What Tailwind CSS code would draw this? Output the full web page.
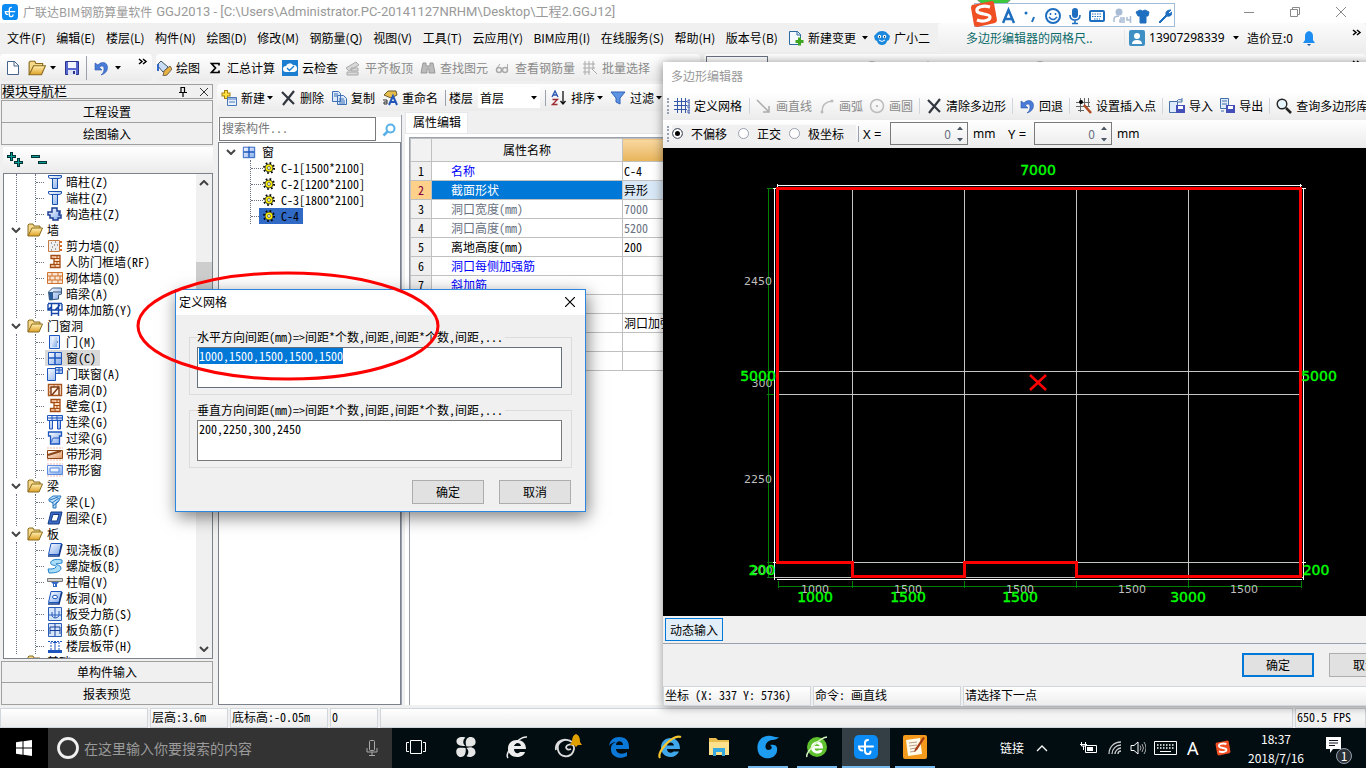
<!DOCTYPE html>
<html lang="zh-CN">
<head>
<meta charset="utf-8">
<title>广联达BIM钢筋算量软件 GGJ2013</title>
<script src="https://cdn.jsdelivr.net/npm/@tailwindcss/browser@4"></script>
</head>
<body class="h-screen overflow-hidden bg-[#f0f0f0] font-['Noto_Sans_CJK_SC',sans-serif] text-xs leading-4 text-black select-auto">

<svg width="0" height="0" class="absolute" aria-hidden="true">
  <defs>
    <linearGradient id="gb" x1="0" y1="0" x2="1" y2="1"><stop offset="0" stop-color="#fff"/><stop offset="1" stop-color="#7fa8ea"/></linearGradient>
    <linearGradient id="gy" x1="0" y1="0" x2="0" y2="1"><stop offset="0" stop-color="#fff0b0"/><stop offset="1" stop-color="#dfa127"/></linearGradient>
    <linearGradient id="go" x1="0" y1="0" x2="1" y2="1"><stop offset="0" stop-color="#fff"/><stop offset="1" stop-color="#e0955c"/></linearGradient>
  </defs>
  <symbol id="folder" viewBox="0 0 16 16"><path d="M1 14V3l1-1h4l1 2h6v3" fill="#f5d98a" stroke="#8a6a1c"/><path d="M1 14 5 6h10.500l-3.500 8z" fill="url(#gy)" stroke="#8a6a1c"/></symbol>
  <symbol id="col" viewBox="0 0 16 16"><path d="M1.500 1.500h13v2l-2 1h-9l-2-1zM5.500 4.500h5v10h-5z" fill="url(#gb)" stroke="#1a4fae"/></symbol>
  <symbol id="gcol" viewBox="0 0 16 16"><path d="M5 2h5v3h3v2h-1v2h2v3h-3v2H6v-2H3v-3H1V6h4z" fill="url(#gb)" stroke="#1c3f95" stroke-width="1.500"/></symbol>
  <symbol id="wallq" viewBox="0 0 16 16"><path d="M1.500 2.500h11v11h-11z" fill="#eee" stroke="#c8793d"/><path d="M13 4h2M13 8h2M13 12h2" stroke="#d36a20" stroke-width="2"/><path d="M4 5h1M8 4h1M10 7h1M5 9h1M8 11h1M4 12h1M7 7h1" stroke="#555"/></symbol>
  <symbol id="brickl" viewBox="0 0 16 16"><path d="M4 1.500h9v12H3.500v-3H7v-6H4z" fill="#ffd9b8" stroke="#a24b12" stroke-width="1.300"/><path d="M10 2v2M7 4.500h6M7 7.500h6M7 10.500h6M10 8v2M8 11v2" stroke="#a24b12"/></symbol>
  <symbol id="brick" viewBox="0 0 16 16"><path d="M.5 2.500h15v11H.5z" fill="#fbe6d4" stroke="#cf7330"/><path d="M0 6h16M0 10h16M5 2v4M11 2v4M3 6v4M8 6v4M13 6v4M5 10v4M11 10v4" stroke="#cf7330"/></symbol>
  <symbol id="beam" viewBox="0 0 16 16"><path d="m1.500 6 4-4h9v6l-3 1v4l-9 1z" fill="url(#gb)" stroke="#3c5878"/><path d="M2 6h4v8H2z" fill="#2d5d97"/><path d="M6 6h8" stroke="#3c5878"/></symbol>
  <symbol id="rebar" viewBox="0 0 16 16"><path d="M1 1.500h14M1 2v6h14V2M4.500 2v12M11.500 2v12M4 11.500h8M1 8l4-4M8 8l5-5" fill="none" stroke="#1546a8" stroke-width="1.400"/></symbol>
  <symbol id="door" viewBox="0 0 16 16"><path d="M2.500 1.500h10v13h-10z" fill="#d6e6ff" stroke="#1c55bd"/><path d="M5 3h5v10H5z" fill="url(#gb)"/><path d="M10 8h1" stroke="#134"/></symbol>
  <symbol id="win" viewBox="0 0 16 16"><path d="M1.500 2.500h13v12h-13z" fill="url(#gb)" stroke="#1c55bd"/><path d="M8 2v12M2 8h12" stroke="#1c55bd" stroke-width="1.500"/></symbol>
  <symbol id="doorwin" viewBox="0 0 16 16"><path d="M.5 2.500h8v12h-8zM8.500 1.500h7v6h-7z" fill="url(#gb)" stroke="#1c55bd"/><path d="M12 1v6M9 4h6" stroke="#1c55bd"/></symbol>
  <symbol id="hole" viewBox="0 0 16 16"><path d="M1.500 2.500h13v11h-13z" fill="#fff0e2" stroke="#a8541f" stroke-width="1.400"/><path d="M1 6h3M1 10h3M7 3v2M11 3v2" stroke="#cf7330"/><path d="M4 13V5h8v8M5 13l6-7" fill="none" stroke="#7a3510" stroke-width="1.400"/></symbol>
  <symbol id="lbeam" viewBox="0 0 16 16"><path d="M.5 1.500h15v5H.5zM2.500 7v8h3V7M10.500 7v8h3V7" fill="url(#gb)" stroke="#1c55bd"/><path d="M1 4h14M5 2v4M10 2v4" stroke="#1c55bd"/></symbol>
  <symbol id="gbeam" viewBox="0 0 16 16"><path d="M1.500 2h13v4h-2v8h-9V6h-2z" fill="url(#gb)" stroke="#1c55bd" stroke-width="1.300"/><path d="M4 12c2 0 0-4 3-4h5" fill="none" stroke="#1c55bd"/></symbol>
  <symbol id="striph" viewBox="0 0 16 16"><path d="M.5 4.500h15v8H.5z" fill="url(#go)" stroke="#8c4517"/><path d="M1 9 14 5" stroke="#8c4517" stroke-width="2"/><path d="M0 2h16M0 14h16" stroke="#f1b9a0" stroke-dasharray="2 1"/></symbol>
  <symbol id="stripw" viewBox="0 0 16 16"><path d="M.5 3.500h15v9H.5z" fill="url(#gb)" stroke="#5b8be0"/><path d="M3 6h9v4H3z" fill="#eef5ff" stroke="#5b8be0"/><path d="M0 2h16M0 14h16" stroke="#f3b9b0" stroke-dasharray="2 1"/></symbol>
  <symbol id="beaml" viewBox="0 0 16 16"><path d="m2 5 4-3h8l-2 4v1l-3 2v5H6V9L2 7z" fill="#bfe0fb" stroke="#2273bd"/><path d="m3 6 8-3M5 9l7-5M6 12l5-4" stroke="#2273bd"/></symbol>
  <symbol id="ring" viewBox="0 0 16 16"><path d="M4 2h11l-3 12H1z" fill="#3a6bc4" stroke="#123a86"/><path d="M6 4.500h6L10 11H4z" fill="#fff" stroke="#123a86"/></symbol>
  <symbol id="slab" viewBox="0 0 16 16"><path d="M4 1.500h10.500l-2.500 11H1.500z" fill="url(#gb)" stroke="#1c55bd"/><path d="M1 14h11l3-12" fill="none" stroke="#123a86" stroke-width="1.500"/></symbol>
  <symbol id="spiral" viewBox="0 0 16 16"><path d="M15 2C8 0 2 3 4 6c2 2 6 1 5 3s-5 2-8 2l1 4c6 0 12-1 12-5 0-3-5-3-5-4s3 0 6-1z" fill="#a9dcf8" stroke="#1f7fc9"/></symbol>
  <symbol id="cap" viewBox="0 0 16 16"><path d="M.5 4.500h15v3H.5z" fill="#d5d5cf" stroke="#777"/><path d="M4 8h8l-2 2v3H6v-3z" fill="#2f6ac9"/><path d="M7.500 10v2" stroke="#fff"/></symbol>
  <symbol id="slabh" viewBox="0 0 16 16"><use href="#slab"/><ellipse cx="8" cy="7" rx="2.500" ry="1.700" fill="#fff" stroke="#1c55bd"/></symbol>
  <symbol id="sreb" viewBox="0 0 16 16"><path d="M1.500 1.500h13v13h-13z" fill="#d5e5fc" stroke="#2a5db8"/><path d="M2 9h12M8 2v10M5 6v4q3 4 7 0V5" fill="none" stroke="#2a5db8"/></symbol>
  <symbol id="nreb" viewBox="0 0 16 16"><path d="M1.500 1.500h13v13h-13z" fill="#d5e5fc" stroke="#2a5db8"/><path d="M8 2v12M3 12V5h10v7M3 8.500h10" fill="none" stroke="#163f97"/></symbol>
  <symbol id="band" viewBox="0 0 16 16"><path d="M1 3.500h14M4 4v8M12 4v8" stroke="#1c55bd" stroke-dasharray="2 1"/><path d="M8 5v7M6 4.500h4" stroke="#1c55bd"/><path d="M1 13.500h14" stroke="#1c55bd" stroke-width="3"/></symbol>
  <symbol id="gear" viewBox="0 0 12 12"><circle cx="6" cy="6" r="4.500" fill="none" stroke="#000" stroke-width="3" stroke-dasharray="1.500 2.030"/><circle cx="6" cy="6" r="4" fill="#f8f000" stroke="#333" stroke-width=".8"/><circle cx="6" cy="6" r="1.500" fill="#fff" stroke="#555" stroke-width=".8"/></symbol>
  <symbol id="chev" viewBox="0 0 10 6"><path d="m1 1 4 4 4-4" fill="none" stroke="#444" stroke-width="2"/></symbol>
  <symbol id="undo" viewBox="0 0 16 16"><path d="M2 3v7h7L6.500 7.500C9 5 11 6 11 9s-1 4-3 6c4-1 6.500-4 6.500-7.500C14.500 2 8.500 1 5 5z" fill="#4a7bd8" stroke="#2a56ac" stroke-width=".6"/></symbol>
  <symbol id="cross" viewBox="0 0 16 16"><path d="m2 2 12 12M14 1 3 15" stroke="#333840" stroke-width="2.200"/></symbol>
  <symbol id="disk" viewBox="0 0 16 16"><path d="M1.500 1.500h13v13h-13z" fill="#5667d0" stroke="#2a348a"/><path d="M4 2h8v6H4z" fill="#f4f6ff"/><path d="M4 10h8v5H4z" fill="#dfe3f4"/><path d="M9 11h2v3H9z" fill="#2a348a"/></symbol>
  <symbol id="s" viewBox="0 0 28 28"><path d="m2 5 20-4q2 0 2 2l3 17q0 2-2 3L7 27q-2 0-3-2L1 8q0-2 1-3z" fill="#f04e23"/><path d="M20 7C13 5 6 7 7 11s13 2 13 6-8 5-13 3" fill="none" stroke="#fff" stroke-width="3.200"/></symbol>
  <symbol id="more" viewBox="0 0 10 8"><path d="m1 1 3 2.500L1 6M5 1l3 2.500L5 6" fill="none" stroke="#000" stroke-width="1.500"/></symbol>
  <symbol id="dd" viewBox="0 0 6 4"><path d="M0 0h6L3 3.500z" fill="currentColor"/></symbol>
  <symbol id="glodon" viewBox="0 0 24 24"><rect width="24" height="24" rx="5" fill="#0b8bf3"/><path d="M14 5q-3 0-3 3v8q0 3 3 3 2.500 0 2.500-2.500M19 11.500H5q0 4 3.500 4" fill="none" stroke="#fff" stroke-width="2" stroke-linecap="round"/></symbol>
</svg>

<div class="flex h-full flex-col">
  <header class="flex h-[23px] shrink-0 items-center bg-white pl-0.5 text-[#999]">
    <svg class="mr-[5px] size-4"><use href="#glodon"/></svg>
    <h1 class="flex gap-1 whitespace-nowrap font-normal"><span>广联达BIM钢筋算量软件</span><span class="font-['Roboto','Noto_Sans_CJK_SC',sans-serif] text-[13px]">GGJ2013 - [C:\Users\Administrator.PC-20141127NRHM\Desktop\工程2.GGJ12]</span></h1>
    <div class="ml-auto flex items-center gap-9 pr-5">
      <button aria-label="最小化"><svg class="size-2.5" viewBox="0 0 10 10"><path d="M0 5.500h10" stroke="#888"/></svg></button>
      <button aria-label="还原"><svg class="size-2.5" viewBox="0 0 10 10"><path d="M.5 2.500h7v7h-7zM2.500 2V.5h7v7H8" fill="none" stroke="#888"/></svg></button>
      <button aria-label="关闭"><svg class="size-2.5" viewBox="0 0 10 10"><path d="m0 0 10 10M10 0 0 10" stroke="#888"/></svg></button>
    </div>
  </header>

  <nav class="flex h-[31px] shrink-0 items-center whitespace-nowrap pb-0.5 pl-[7px]">
    <div class="mr-4 flex w-[771px] shrink-0 justify-between">
      <button>文件(F)</button><button>编辑(E)</button><button>楼层(L)</button><button>构件(N)</button><button>绘图(D)</button><button>修改(M)</button><button>钢筋量(Q)</button><button>视图(V)</button><button>工具(T)</button><button>云应用(Y)</button><button>BIM应用(I)</button><button>在线服务(S)</button><button>帮助(H)</button><button>版本号(B)</button>
    </div>
    <button class="flex items-center gap-1"><svg class="-ml-1.5 size-4" viewBox="0 0 16 16"><path d="M1.500 1.500h8l3 3v10h-11z" fill="#f4faff" stroke="#2a6a9e"/><path d="M9 1v4h4" fill="none" stroke="#2a6a9e"/><path d="M11.500 7.500v8M7.500 11.500h8" stroke="#3da51f" stroke-width="3"/></svg>新建变更<svg class="ml-0.5 h-1 w-1.5"><use href="#dd"/></svg></button>
    <button class="ml-1.5 flex items-center gap-1"><svg class="size-4" viewBox="0 0 16 16"><path d="M2 4q2-3 6-3t6 3l2 2-1 4-2 1q-1 4-5 4t-5-4L1 10 0 6z" fill="#1a88dd"/><circle cx="5.500" cy="6.500" r="1.700" fill="#fff"/><circle cx="10.500" cy="6.500" r="1.700" fill="#fff"/><path d="M5.500 6v1.500M10.500 6v1.500" stroke="#124"/><path d="M5 10q3 3 6 0" fill="none" stroke="#fff"/></svg>广小二</button>
    <div class="ml-2 flex h-[29px] flex-1 items-center rounded bg-gradient-to-b from-[#fbfbfb] to-[#ededed]">
      <a href="#" class="w-[187px] shrink-0 border-r border-gray-200 pl-7 text-[#0d6b6b]">多边形编辑器的网格尺..</a>
      <button class="ml-1 flex items-center gap-1"><svg class="size-4" viewBox="0 0 16 16"><rect width="16" height="16" rx="2" fill="#3e8fc4"/><circle cx="8" cy="6" r="3" fill="#fff"/><path d="M3 14q0-4 5-4t5 4z" fill="#fff"/></svg><span class="w-[78px] text-left font-['Noto_Sans',sans-serif]">13907298339</span><svg class="ml-0.5 h-1 w-1.5"><use href="#dd"/></svg></button>
      <span class="ml-2">造价豆:0</span>
      <svg class="ml-2.5 h-4 w-3" viewBox="0 0 12 16"><path d="M6 1q4 1 4 5v4l2 3H0l2-3V6q0-4 4-5z" fill="#1e8df2"/><path d="M4 14h4l-2 2z" fill="#1055a0"/></svg>
      <svg class="ml-auto mr-1 mb-2.5 h-2 w-2.5"><use href="#more"/></svg>
    </div>
  </nav>

  <div class="flex h-[30px] shrink-0 items-start whitespace-nowrap">
    <div class="flex h-[27px] w-[152px] shrink-0 items-center rounded bg-gradient-to-b from-white to-[#ebebeb] pl-[5px]">
      <button aria-label="新建"><svg class="size-4" viewBox="0 0 16 16"><path d="M2.500 1.500h7l4 4v9h-11z" fill="#fff" stroke="#44648e"/><path d="M9 1v5h5" fill="none" stroke="#44648e"/></svg></button>
      <button aria-label="打开" class="ml-[7px] flex items-center gap-1"><svg class="size-4.5"><use href="#folder"/></svg><svg class="h-1 w-1.5"><use href="#dd"/></svg></button>
      <button aria-label="保存" class="ml-2"><svg class="size-4"><use href="#disk"/></svg></button>
      <span class="ml-1.5 h-6 w-px bg-gray-400"></span>
      <button aria-label="撤销" class="ml-1.5 flex items-center gap-1.5"><svg class="size-4"><use href="#undo"/></svg><svg class="h-1 w-1.5"><use href="#dd"/></svg></button>
      <svg class="ml-auto mr-1 mb-3 h-2 w-2.5"><use href="#more"/></svg>
    </div>
    <div class="ml-1 flex h-[27px] w-[544px] shrink-0 items-center gap-[7px] rounded bg-gradient-to-b from-white to-[#ebebeb] text-[#8a8a8a]">
      <button class="flex items-center gap-1 text-black"><svg class="size-4" viewBox="0 0 16 16"><path d="m1 5 4-4 7 6-5 5z" fill="#c9dcf5" stroke="#456"/><path d="M2 4v7" stroke="#2f6ac9" stroke-width="2"/><path d="m8 11 6-5 2 3-5 6-4 1z" fill="#e7b23f" stroke="#765"/></svg>绘图</button>
      <button class="flex items-center gap-1 text-black"><svg class="size-4" viewBox="0 0 16 16"><path d="M12 5.500v-2H4.500l4 4.500-4 4.500H12v-2" fill="none" stroke="#000" stroke-width="1.700"/></svg>汇总计算</button>
      <button class="flex items-center gap-1 text-black"><svg class="size-4" viewBox="0 0 16 16"><rect width="16" height="16" fill="#1c7ed0"/><path d="M4 12a3 3 0 0 1 0-6 4 4 0 0 1 7-1 3.500 3.500 0 0 1 1 7z" fill="#fff"/><path d="m5 8 2.500 2.500L12 6" fill="none" stroke="#1c7ed0" stroke-width="1.400"/></svg>云检查</button>
      <button class="flex items-center gap-1"><svg class="size-4" viewBox="0 0 16 16"><path d="m1 8 10-6 3 3-10 6zM2 12h11v3H2zM6 8h7v3H6z" fill="#d8d8d8" stroke="#aaa"/></svg>平齐板顶</button>
      <button class="flex items-center gap-1"><svg class="size-4" viewBox="0 0 16 16"><path d="M3 3h3v3h4V3h3l2 10H9V9H7v4H1z" fill="#bbb" stroke="#999"/></svg>查找图元</button>
      <button class="flex items-center gap-1"><svg class="size-4" viewBox="0 0 16 16"><circle cx="4" cy="10" r="2.500" fill="none" stroke="#aaa" stroke-width="1.500"/><circle cx="10" cy="10" r="2.500" fill="none" stroke="#aaa" stroke-width="1.500"/><path d="M2 8 5 4M12.500 10V4" stroke="#aaa"/></svg>查看钢筋量</button>
      <button class="flex items-center gap-1"><svg class="size-4" viewBox="0 0 16 16"><path d="M1 4h12M1 8h12M1 12h7M3 1v14M7 1v14M11 1v8M10 9l5 5" fill="none" stroke="#aaa"/></svg>批量选择</button>
      <svg class="ml-auto mr-1 h-2 w-2.5"><use href="#more"/></svg>
    </div>
    <div class="ml-1 flex h-[27px] flex-1 items-center gap-10 rounded bg-gradient-to-b from-white to-[#ebebeb] pl-0.5">
      <span class="h-[23px] w-[62px] border border-gray-500 bg-white"></span>
      <svg class="size-4"><path d="M1 3h13v10H1z" fill="#ddd" stroke="#aaa"/></svg>
      <svg class="size-4"><circle cx="8" cy="8" r="6" fill="none" stroke="#bbb" stroke-width="2"/></svg>
      <svg class="size-4"><path d="M8 1v14M1 8h14" stroke="#bbb"/></svg>
      <svg class="size-4"><path d="M1 3h13v10H1z" fill="#ddd" stroke="#aaa"/></svg>
      <svg class="size-4"><circle cx="8" cy="8" r="6" fill="none" stroke="#bbb" stroke-width="2"/></svg>
      <svg class="size-4"><path d="M1 3h13v10H1z" fill="#ddd" stroke="#aaa"/></svg>
      <svg class="ml-auto mr-1 mb-2 h-2 w-2.5"><use href="#more"/></svg>
    </div>
  </div>

  <main class="flex min-h-0 flex-1 [font-feature-settings:'hwid']">
    <aside class="flex w-[213px] shrink-0 flex-col pl-px">
      <div class="flex h-[15px] items-center border border-[#a0a0a0] text-[13px]">
        <h2 class="pb-0.5">模块导航栏</h2>
        <button aria-label="固定" class="ml-auto mr-3"><svg class="size-2.5" viewBox="0 0 10 10"><path d="M3 0v5M3 .5h4M6.500 0v5M1 5.500h8M5 6v4" fill="none" stroke="#000" stroke-width="1.200"/></svg></button>
        <button aria-label="关闭" class="mr-1"><svg class="size-2" viewBox="0 0 8 8"><path d="m0 0 8 8M8 0 0 8" stroke="#333"/></svg></button>
      </div>
      <button class="mt-px h-[23px] border border-[#a0a0a0] bg-[#f0f0f0]">工程设置</button>
      <button class="h-[22px] border border-t-0 border-[#a0a0a0] bg-[#f0f0f0]">绘图输入</button>
      <div class="ml-0.5 mt-0.5 flex h-[26px] items-center gap-2 bg-gradient-to-b from-white to-[#ebebeb] pl-1">
        <button aria-label="全部展开"><svg class="size-4" viewBox="0 0 16 16"><path d="M4.500 0v9M0 4.500h9M11.500 6v9M7 10.500h9" stroke="#033" stroke-width="3"/><path d="M4.500 1v7M1 4.500h7M11.500 7v7M8 10.500h7" stroke="#0a9e96"/></svg></button>
        <button aria-label="全部折叠"><svg class="size-4" viewBox="0 0 16 16"><path d="M0 4.500h9M7 10.500h9" stroke="#033" stroke-width="3"/><path d="M1 4.500h7M8 10.500h7" stroke="#0a9e96"/></svg></button>
      </div>
      <div class="ml-0.5 flex min-h-0 flex-1 overflow-hidden border border-[#7b828c] bg-white whitespace-nowrap">
        <div class="flex-1">
          <div class="ml-3 border-l border-dotted border-gray-500 pl-[18px]">
            <ul class="border-l border-dotted border-gray-500 *:flex *:h-4 *:items-center *:gap-[3px] *:before:w-2 *:before:border-t *:before:border-dotted *:before:border-gray-500">
              <li><svg class="size-4"><use href="#col"/></svg>暗柱(Z)</li>
              <li><svg class="size-4"><use href="#col"/></svg>端柱(Z)</li>
              <li><svg class="size-4"><use href="#gcol"/></svg>构造柱(Z)</li>
            </ul>
          </div>
          <div class="flex h-4 items-center gap-1 pl-[7px]"><svg class="mr-1 h-1.5 w-2.5"><use href="#chev"/></svg><svg class="-ml-0.5 size-4"><use href="#folder"/></svg>墙</div>
          <div class="ml-3 border-l border-dotted border-gray-500 pl-[18px]">
            <ul class="border-l border-dotted border-gray-500 *:flex *:h-4 *:items-center *:gap-[3px] *:before:w-2 *:before:border-t *:before:border-dotted *:before:border-gray-500">
              <li><svg class="size-4"><use href="#wallq"/></svg>剪力墙(Q)</li>
              <li><svg class="size-4"><use href="#brickl"/></svg>人防门框墙(RF)</li>
              <li><svg class="size-4"><use href="#brick"/></svg>砌体墙(Q)</li>
              <li><svg class="size-4"><use href="#beam"/></svg>暗梁(A)</li>
              <li><svg class="size-4"><use href="#rebar"/></svg>砌体加筋(Y)</li>
            </ul>
          </div>
          <div class="flex h-4 items-center gap-1 pl-[7px]"><svg class="mr-1 h-1.5 w-2.5"><use href="#chev"/></svg><svg class="-ml-0.5 size-4"><use href="#folder"/></svg>门窗洞</div>
          <div class="ml-3 border-l border-dotted border-gray-500 pl-[18px]">
            <ul class="border-l border-dotted border-gray-500 *:flex *:h-4 *:items-center *:gap-[3px] *:before:w-2 *:before:border-t *:before:border-dotted *:before:border-gray-500">
              <li><svg class="size-4"><use href="#door"/></svg>门(M)</li>
              <li><span class="-ml-0.5 flex h-4 items-center gap-[3px] bg-[#d9d9d9] pl-0.5 pr-1"><svg class="size-4"><use href="#win"/></svg>窗(C)</span></li>
              <li><svg class="size-4"><use href="#doorwin"/></svg>门联窗(A)</li>
              <li><svg class="size-4"><use href="#hole"/></svg>墙洞(D)</li>
              <li><svg class="size-4"><use href="#brickl"/></svg>壁龛(I)</li>
              <li><svg class="size-4"><use href="#lbeam"/></svg>连梁(G)</li>
              <li><svg class="size-4"><use href="#gbeam"/></svg>过梁(G)</li>
              <li><svg class="size-4"><use href="#striph"/></svg>带形洞</li>
              <li><svg class="size-4"><use href="#stripw"/></svg>带形窗</li>
            </ul>
          </div>
          <div class="flex h-4 items-center gap-1 pl-[7px]"><svg class="mr-1 h-1.5 w-2.5"><use href="#chev"/></svg><svg class="-ml-0.5 size-4"><use href="#folder"/></svg>梁</div>
          <div class="ml-3 border-l border-dotted border-gray-500 pl-[18px]">
            <ul class="border-l border-dotted border-gray-500 *:flex *:h-4 *:items-center *:gap-[3px] *:before:w-2 *:before:border-t *:before:border-dotted *:before:border-gray-500">
              <li><svg class="size-4"><use href="#beaml"/></svg>梁(L)</li>
              <li><svg class="size-4"><use href="#ring"/></svg>圈梁(E)</li>
            </ul>
          </div>
          <div class="flex h-4 items-center gap-1 pl-[7px]"><svg class="mr-1 h-1.5 w-2.5"><use href="#chev"/></svg><svg class="-ml-0.5 size-4"><use href="#folder"/></svg>板</div>
          <div class="ml-3 border-l border-dotted border-gray-500 pl-[18px]">
            <ul class="border-l border-dotted border-gray-500 *:flex *:h-4 *:items-center *:gap-[3px] *:before:w-2 *:before:border-t *:before:border-dotted *:before:border-gray-500">
              <li><svg class="size-4"><use href="#slab"/></svg>现浇板(B)</li>
              <li><svg class="size-4"><use href="#spiral"/></svg>螺旋板(B)</li>
              <li><svg class="size-4"><use href="#cap"/></svg>柱帽(V)</li>
              <li><svg class="size-4"><use href="#slabh"/></svg>板洞(N)</li>
              <li><svg class="size-4"><use href="#sreb"/></svg>板受力筋(S)</li>
              <li><svg class="size-4"><use href="#nreb"/></svg>板负筋(F)</li>
              <li><svg class="size-4"><use href="#band"/></svg>楼层板带(H)</li>
            </ul>
          </div>
          <div class="flex h-4 items-center gap-1 pl-[7px]"><svg class="mr-1 h-1.5 w-2.5"><use href="#chev"/></svg><svg class="-ml-0.5 size-4"><use href="#folder"/></svg>基础</div>
        </div>
        <div class="flex w-4 flex-col items-center bg-[#f0f0f0] py-1.5">
          <svg class="h-1.5 w-2.5 rotate-180"><use href="#chev"/></svg>
          <span class="mt-[76px] h-10 w-4 bg-[#cdcdcd]"></span>
          <svg class="mt-auto h-1.5 w-2.5"><use href="#chev"/></svg>
        </div>
      </div>
      <button class="mt-0.5 h-[22px] border border-[#a0a0a0] bg-[#f0f0f0]">单构件输入</button>
      <button class="mb-0.5 h-[22px] border border-t-0 border-[#a0a0a0] bg-[#f0f0f0]">报表预览</button>
    </aside>

    <section class="ml-1 flex min-w-0 flex-1 flex-col">
      <div class="flex h-[27px] shrink-0 items-center gap-[7px] whitespace-nowrap rounded bg-gradient-to-b from-white to-[#ebebeb] pl-1">
        <button class="flex items-center gap-1"><svg class="size-4" viewBox="0 0 16 16"><path d="M5 0v9M.5 4.500h9" stroke="#a88310" stroke-width="4"/><path d="M5 1v7M1.500 4.500h7" stroke="#ffe040" stroke-width="2"/><path d="M6.500 7.500h9v8h-9z" fill="#e8f0fc" stroke="#4a78b8"/><path d="M7 9h8M8 12h6" stroke="#4a78b8"/></svg>新建<svg class="-ml-0.5 h-1 w-1.5"><use href="#dd"/></svg></button>
        <button class="flex items-center gap-1"><svg class="size-4"><use href="#cross"/></svg>删除</button>
        <button class="flex items-center gap-1"><svg class="size-4" viewBox="0 0 16 16"><path d="M1.500 1.500h6l2 2v8h-8zM6.500 5.500h6l3 3v6h-9z" fill="#dbe9fb" stroke="#3c6fb5"/><path d="M3 4h4M3 6h3M8 9h5M8 11h6M8 13h6" stroke="#3c6fb5"/></svg>复制</button>
        <button class="flex items-center gap-1"><svg class="size-4" viewBox="0 0 16 16"><path d="m2 5 4-4h8l1 4-6 3z" fill="#e7bd4c" stroke="#6b5a2a"/><path d="m7 15 4-9 4 9M8.500 12h5" fill="none" stroke="#2455b8" stroke-width="2"/><path d="M1 10h4v4H2v-2h3" fill="none" stroke="#333"/></svg>重命名</button>
        <label for="floor" class="border-l border-gray-400 pl-[3px]">楼层</label>
        <select id="floor" class="-ml-0.5 h-[21px] w-[62px] appearance-none bg-white pl-0.5 leading-4 bg-[url('data:image/svg+xml,%3Csvg%20xmlns=%22http://www.w3.org/2000/svg%22%20width=%226%22%20height=%224%22%3E%3Cpath%20d=%22M0%200h6L3%203.5z%22/%3E%3C/svg%3E')] bg-[right_3px_center] bg-no-repeat"><option>首层</option></select>
        <span class="-ml-0.5 h-4 w-px bg-gray-400"></span>
        <button class="-ml-0.5 flex items-center gap-1"><svg class="size-4" viewBox="0 0 16 16"><path d="m1 7 3-6 3 6M2 5h4" fill="none" stroke="#2a53b0" stroke-width="1.300"/><path d="M1.500 9.500h5l-5 5h5" fill="none" stroke="#a02a34" stroke-width="1.300"/><path d="M12 1v13M9.500 11l2.500 3 2.500-3" fill="none" stroke="#111" stroke-width="1.300"/></svg>排序<svg class="-ml-0.5 h-1 w-1.5"><use href="#dd"/></svg></button>
        <button class="flex items-center gap-1"><svg class="size-4" viewBox="0 0 16 16"><path d="M1 2h14l-5 6v6l-4-2V8z" fill="#5f94e4" stroke="#2f62b5"/></svg>过滤<svg class="-ml-0.5 h-1 w-1.5"><use href="#dd"/></svg></button>
      </div>
      <div class="flex min-h-0 flex-1">
        <div class="ml-px mb-0.5 mt-1 flex w-[184px] shrink-0 flex-col border-r border-gray-400">
          <div class="mt-0.5 flex h-[25px] shrink-0 bg-white">
            <input aria-label="搜索构件" placeholder="搜索构件..." class="ml-px h-6 w-[157px] border border-[#7a7a7a] bg-white pb-1 pl-0.5 placeholder:text-[#777]">
            <button aria-label="搜索" class="mx-auto"><svg class="size-4" viewBox="0 0 16 16"><circle cx="9.500" cy="6.500" r="4" fill="none" stroke="#58b0e8" stroke-width="2"/><path d="m6.500 9.500-4 4" stroke="#58b0e8" stroke-width="2.500"/></svg></button>
          </div>
          <div class="flex-1 border border-[#7b828c] bg-white pt-px">
            <div class="flex h-4 items-center gap-1 pl-[7px]"><svg class="mr-1 h-1.5 w-2.5"><use href="#chev"/></svg><svg class="-ml-0.5 mr-0.5 size-3.5"><use href="#win"/></svg>窗</div>
            <ul class="ml-[31px] whitespace-nowrap border-l border-dotted border-gray-500 *:flex *:h-4 *:items-center *:before:w-3 *:before:border-t *:before:border-dotted *:before:border-gray-500">
              <li><svg class="mr-1.5 size-3"><use href="#gear"/></svg>C-1[1500*2100]</li>
              <li><svg class="mr-1.5 size-3"><use href="#gear"/></svg>C-2[1200*2100]</li>
              <li><svg class="mr-1.5 size-3"><use href="#gear"/></svg>C-3[1800*2100]</li>
              <li><span class="-ml-1 flex h-4 items-center bg-[#316ac5] pl-1 pr-1"><svg class="mr-1.5 size-3"><use href="#gear"/></svg>C-4</span></li>
            </ul>
          </div>
        </div>
        <div class="ml-[3px] mb-0.5 mt-px flex flex-1 flex-col">
          <h2 class="h-[21px] w-[63px] border border-b-0 border-gray-200 bg-white pl-[7px] leading-[18px]">属性编辑</h2>
          <div class="flex-1 border-t border-gray-200 bg-white pl-1 pt-[3px]">
            <div class="h-full border-l border-t border-gray-400">
              <table class="w-full table-fixed border-collapse whitespace-nowrap [&_td]:border [&_td]:border-[#c0c0c0] [&_td]:p-0 [&_th]:border [&_th]:border-[#c0c0c0] [&_th]:p-0">
                <colgroup><col class="w-[21px]"><col class="w-[191px]"><col></colgroup>
                <thead><tr class="h-[23px] bg-[#f2f2f2] font-normal"><th></th><th class="font-normal">属性名称</th><th class="bg-gradient-to-b from-[#f8d8a0] to-[#e8b458] font-normal" aria-label="属性值"></th></tr></thead>
                <tbody class="[&_tr]:h-[19px] [&_td]:leading-4 [&_td:first-child]:bg-[#f0f0f0] [&_td:first-child]:text-center [&_td:nth-child(2)]:pl-[19px] [&_td:nth-child(3)]:pl-px">
                  <tr><td>1</td><td class="text-[#00f]">名称</td><td>C-4</td></tr>
                  <tr><td class="bg-[#ffd08a]! text-[#800040]">2</td><td class="bg-[#0078d7] text-white">截面形状</td><td class="bg-[#d9e8f6]">异形</td></tr>
                  <tr><td>3</td><td class="text-gray-500">洞口宽度(mm)</td><td class="text-gray-500">7000</td></tr>
                  <tr><td>4</td><td class="text-gray-500">洞口高度(mm)</td><td class="text-gray-500">5200</td></tr>
                  <tr><td>5</td><td>离地高度(mm)</td><td>200</td></tr>
                  <tr><td>6</td><td class="text-[#00f]">洞口每侧加强筋</td><td></td></tr>
                  <tr><td>7</td><td class="text-[#00f]">斜加筋</td><td></td></tr>
                  <tr><td>8</td><td></td><td></td></tr>
                  <tr><td>9</td><td></td><td>洞口加强筋</td></tr>
                  <tr><td>10</td><td></td><td></td></tr>
                  <tr><td>11</td><td></td><td></td></tr>
                </tbody>
              </table>
            </div>
          </div>
        </div>
      </div>
    </section>
  </main>

  <div class="flex h-[21px] shrink-0 gap-0.5 whitespace-nowrap pt-px [font-feature-settings:'hwid'] *:border *:border-gray-300 *:bg-gradient-to-b *:from-white *:to-[#ededed] *:pl-px">
    <span class="w-[148px]"></span><span class="w-[78px]">层高:3.6m</span><span class="w-[98px]">底标高:-0.05m</span><span class="w-12">0</span><span class="flex-1"></span><span class="w-[71px]">650.5 FPS</span>
  </div>

  <footer class="flex h-10 shrink-0 items-stretch bg-[#020d12] text-white">
    <button aria-label="开始" class="flex w-12 items-center justify-center bg-black"><svg class="size-4" viewBox="0 0 16 16"><path d="M0 2.200 6.500 1.300V7.500H0zM7.500 1.200 16 0v7.500H7.500zM0 8.500h6.500v6.200L0 13.800zM7.500 8.500H16V16l-8.500-1.200z" fill="#fff"/></svg></button>
    <label class="flex w-[344px] items-center bg-[#333] pl-2">
      <svg class="size-6" viewBox="0 0 24 24"><circle cx="12" cy="12" r="9.500" fill="none" stroke="#f0f0f0" stroke-width="2.800"/></svg>
      <input placeholder="在这里输入你要搜索的内容" class="ml-1 w-[280px] bg-transparent text-sm placeholder:text-[#9a9a9a]">
      <svg class="ml-0.5 h-4 w-3" viewBox="0 0 12 16"><rect x="3.500" y=".5" width="5" height="10" rx="1" fill="none" stroke="#aaa"/><path d="M1 8v4h10V8M6 12v3.500M3 15.500h6" fill="none" stroke="#aaa"/></svg>
    </label>
    <nav class="flex items-stretch *:flex *:w-12 *:items-center *:justify-center *:border-b-2 *:border-transparent" aria-label="任务栏">
      <button aria-label="任务视图"><svg class="h-4 w-5" viewBox="0 0 20 16"><path d="M4.500 1.500h11v13h-11zM3 3.500H.5v9H3M17 3.500h2.500v9H17" fill="none" stroke="#fff"/></svg></button>
      <button aria-label="应用" class="ml-[2px]"><svg class="size-[22px]" viewBox="0 0 22 22"><path d="M10.500 1.500C5 0 1 2 1.500 6s6 4 9 4c-3-2-3-6 0-8.500zM11.500 10.500c-2-5 0-9.500 4-9.500s5.500 3 5 6-5 4-9 3.500zM11.500 12c6-2 9 1 9 4.500s-6 6-9 3.500c2-2 3-5 0-8zM10.500 12c1 5-1 9-4.500 9S.5 17 1.500 14s4-2 9-2z" fill="#e6e6e6"/></svg></button>
      <button aria-label="浏览器" class="ml-[3px]"><svg class="size-6" viewBox="0 0 24 24"><path d="M9 14h12c0-6-4-9-9-9s-9 3-9 8.500 4 8.500 9 8.500c4 0 7-1.500 8-5h-5c-2.500 2.500-6 1-6-3zM9 11c.5-4 6.500-4 7 0z" fill="#eee" fill-rule="evenodd"/><path d="M3 23C-1 18 14 1 22 2" fill="none" stroke="#eee" stroke-width="1.500"/></svg></button>
      <button aria-label="提醒" class="ml-[3px]"><svg class="h-7 w-7" viewBox="0 0 28 28"><path d="M18 9C11 4 2 9 4 17s12 8 15 2-1-9-5-7-1 6 3 4M14 7C6 5 1 11 2 17" fill="none" stroke="#ddd" stroke-width="1.800"/><path d="M22 1q4 1 4 8l2 3H16l2-3q0-7 4-8z" fill="#e0a000"/><path d="M20 12h4l-2 2z" fill="#e0a000"/></svg></button>
      <button aria-label="Edge" class="ml-[3px]"><svg class="size-[22px]" viewBox="0 0 22 22"><path d="M1 10C2 4 6 1 11 1c7 0 10 4 10 10v2H8c0 5 7 6 11 3v4c-7 4-17 1-16-8 0-3 2-5 5-6-3 0-6 2-7 4zM8 9h7c0-5-7-5-7 0z" fill="#0b78d8" fill-rule="evenodd"/></svg></button>
      <button aria-label="Internet Explorer" class="ml-[3px]"><svg class="size-6" viewBox="0 0 24 24"><path d="M9 14h13c0-7-4-11-9.500-11S3 7 3 12.500 7 22 12.500 22c4 0 7-2 8.500-5.500h-5.500c-2.500 2.500-6.500 1-6.500-2.500zM9 10.500c.5-4 6.500-4 7 0z" fill="#3fa7ea" fill-rule="evenodd"/><path d="M2 23C-2 17 15-1 23 2" fill="none" stroke="#f4c430" stroke-width="2.200"/></svg></button>
      <button aria-label="文件资源管理器" class="ml-px"><svg class="size-[22px]" viewBox="0 0 22 22"><path d="M1 2h7l2 2h11v15H1z" fill="#e9bd4d"/><path d="M1 6h20v13H1z" fill="#ffe08c"/><path d="M5 20v-8h12v8h-3v-4H8v4z" fill="#35a8e0"/></svg></button>
      <button aria-label="广联达" class="w-10! ml-[5px] mr-1 border-[#76b9ed]!"><svg class="size-6" viewBox="0 0 24 24"><path d="M23 2c-3 4-7 2-10 4-4 2-5 8-1 9 4 0 5-3 2-5 5-1 8 1 7 6-1 8-13 10-18 3C-1 11 3 2 11 1c5-1 8 2 12 1z" fill="#1e9cf0"/></svg></button>
      <button aria-label="360浏览器" class="w-10! mx-[5px] border-[#76b9ed]!"><svg class="size-6" viewBox="0 0 24 24"><circle cx="12" cy="12" r="10" fill="#5fc12e"/><path d="M9.500 13.500H18C18 9 16 6.500 12.500 6.500S6 9 6 12.500s3 6 6.500 6c2.500 0 4.500-1 5-3.500H14c-1.500 1.500-4 1-4.500-1.500zM9.500 11c.5-2.500 4.500-2.500 5 0z" fill="#fff" fill-rule="evenodd"/><path d="M2 22C0 18 14 3 22 2" fill="none" stroke="#d6f5c0" stroke-width="1.500"/></svg></button>
      <button aria-label="钢筋算量" class="border-[#76b9ed]! bg-[#333f44]"><svg class="size-6"><use href="#glodon"/></svg></button>
      <button aria-label="笔记" class="w-10! ml-[5px] border-[#76b9ed]!"><svg class="size-6" viewBox="0 0 24 24"><rect width="24" height="24" rx="2" fill="#f39a1c"/><path d="m3 5 14-2 2 16-14 2z" fill="#fffbe8"/><path d="M6 8l8-1M6 11l8-1M7 14l6-1M7 17l6-1" stroke="#b98"/><path d="m12 14 8-12 2 1-8 12-3 2z" fill="#a53a14"/></svg></button>
    </nav>
    <div class="ml-auto flex items-center">
      <span class="w-9">链接</span>
      <svg class="mr-8 h-2 w-3" viewBox="0 0 12 8"><path d="m1 7 5-5 5 5" fill="none" stroke="#fff" stroke-width="1.300"/></svg>
      <svg class="mr-2.5 h-4 w-[18px]" viewBox="0 0 18 16"><path d="M5.500 5.500h11v7h-11z" fill="none" stroke="#fff"/><path d="M7 7h6v4H7z" fill="#fff"/><path d="M1.500 2v4h4V2M3.500 6v4M0 4.500h7" fill="none" stroke="#fff"/></svg>
      <svg class="mr-2 size-3.5" viewBox="0 0 14 14"><path d="M1 13C1 6 6 1 13 1M4 13c0-5 4-9 9-9M7 13c0-3 3-6 6-6M10 13q0-3 3-3" fill="none" stroke="#ccc" stroke-width="1.300"/></svg>
      <svg class="mr-2 size-4" viewBox="0 0 16 16"><path d="M1 5.500h3L8 2v12l-4-3.500H1z" fill="none" stroke="#fff"/><path d="M10 5.500q2 2.500 0 5M12 4q3 4 0 8M14 2q4 6 0 12" fill="none" stroke="#aaa"/></svg>
      <svg class="mr-2.5 h-3.5 w-[23px]" viewBox="0 0 23 14"><path d="M.5.5h22v13H.5z" fill="none" stroke="#fff"/><path d="M3 4h17M3 7h17" stroke="#fff" stroke-width="1.300" stroke-dasharray="1.500 1.500"/><path d="M6 10.500h11" stroke="#fff"/></svg>
      <span class="mr-4 w-3 font-['Noto_Sans',sans-serif] text-lg">A</span>
      <svg class="size-4"><use href="#s"/></svg>
      <div class="ml-[17px] mr-5 text-center leading-[19px]"><div>18:37</div><div>2018/7/16</div></div>
      <span class="relative mr-[18px] block size-6"><svg class="size-5" viewBox="0 0 20 20"><path d="M2 1h15v12H9l-3 4v-4H2z" fill="#fff"/><path d="M5 4.500h9M5 7h9M5 9.500h6" stroke="#112"/></svg><span class="absolute -right-1 -bottom-1 size-4 rounded-full border border-gray-400 bg-[#2a3136] text-center leading-[14px]">1</span></span>
    </div>
  </footer>
</div>

<div class="absolute left-[970px] top-0 flex h-[27px] items-center" role="toolbar" aria-label="输入法">
  <svg class="absolute left-0 -top-4 size-[46px]" viewBox="0 0 46 46"><circle cx="24" cy="0" r="23" fill="#3cc83c" stroke="#888"/></svg>
  <div class="absolute left-1 top-[3px] h-6 w-[201px] border border-[#9fbcd8] bg-white"></div>
  <svg class="relative size-7"><use href="#s"/></svg>
  <svg class="relative ml-1 mt-1 h-5 w-[170px]" viewBox="0 0 170 20" fill="none" stroke="#1f6fc0" stroke-width="2">
    <path d="m1 17 5.500-13L12 17M3 13h8" stroke-width="2.500"/><circle cx="24" cy="7" r="1.500" fill="#1f6fc0" stroke="none"/><path d="m32 11-2 5"/>
    <circle cx="51" cy="10" r="7"/><path d="M47 11q4 5 8 0M48.500 7v2M53.500 7v2" stroke-width="1.500"/>
    <rect x="71" y="3" width="4" height="8" rx="2" fill="#1f6fc0"/><path d="M68 9q0 5 5 5t5-5M73 14v4M70 17.500h6" stroke-width="1.600"/>
    <rect x="88" y="5" width="14" height="10" rx="1"/><path d="M90 8h10M90 10.500h10M92 13h6" stroke-width="1.200" stroke-dasharray="1.500 1"/>
    <g stroke="#a9bcd6"><circle cx="117" cy="6" r="2.500" fill="#a9bcd6"/><path d="M112 16v-3q0-3 5-3M118 12h4v2h-4v2h5M125 11v3h3M128.500 10v7" stroke-width="1.500"/></g>
    <path d="m134 6 4-2q3 2 5 0l4 2-1 4h-2v7h-6v-7h-2z" fill="#1f6fc0" stroke-width="1"/>
    <path d="m157 16 7-7q-1-5 5-5l-3 3 1 1 3-2q0 5-5 4l-7 7z" fill="#1f6fc0" stroke-width="1"/>
  </svg>
</div>

<section class="absolute top-[62px] bottom-[62px] left-[663px] -right-[54px] flex flex-col whitespace-nowrap bg-[#f0f0f0] shadow-[0_1px_10px_rgba(0,0,0,0.45)]" aria-label="多边形编辑器">
  <h2 class="h-[30px] shrink-0 bg-white pl-2 leading-[28px] text-[#999]">多边形编辑器</h2>
  <div class="flex h-7 shrink-0 items-center gap-[6px] rounded-b bg-gradient-to-b from-white to-[#ebebeb] pb-px pl-1 text-[#8a8a8a]">
    <span class="h-4 w-0.5 border-l-2 border-dotted border-gray-400"></span>
    <button class="-ml-px flex items-center gap-1 pr-px text-black"><svg class="size-4" viewBox="0 0 16 16"><path d="M0 3.500h13M0 7.500h13M0 11.500h13M3.500 0v15M7.500 0v15M11.500 0v15" stroke="#3557a8"/><path d="M14 2h2v3h-2zM14 7h2v3h-2zM14 12h2v3h-2z" fill="none" stroke="#3557a8"/></svg>定义网格</button>
    <span class="h-4 w-px bg-gray-300"></span>
    <button class="flex items-center gap-1 pr-px"><svg class="size-4" viewBox="0 0 16 16"><path d="m1 2 11 11M13 8v6H7" fill="none" stroke="#aaa" stroke-width="1.500"/></svg>画直线</button>
    <button class="flex items-center gap-1"><svg class="size-4" viewBox="0 0 16 16"><path d="M3 14Q3 4 13 3" fill="none" stroke="#bbb" stroke-width="1.500"/><circle cx="3" cy="14" r="1.500" fill="#bbb"/><circle cx="13" cy="3" r="1.500" fill="#bbb"/></svg>画弧</button>
    <button class="flex items-center gap-1"><svg class="size-4" viewBox="0 0 16 16"><circle cx="8" cy="8" r="6.500" fill="none" stroke="#bbb" stroke-width="1.500"/><circle cx="8" cy="8" r="1" fill="#aaa"/></svg>画圆</button>
    <span class="h-4 w-px bg-gray-300"></span>
    <button class="flex items-center gap-1 text-black"><svg class="size-4"><use href="#cross"/></svg>清除多边形</button>
    <span class="h-4 w-px bg-gray-300"></span>
    <button class="flex items-center gap-1 text-black"><svg class="size-4"><use href="#undo"/></svg>回退</button>
    <span class="h-4 w-px bg-gray-300"></span>
    <button class="flex items-center gap-1 text-black"><svg class="size-4" viewBox="0 0 16 16"><path d="M0 4.500h14M0 8.500h14M2 12.500h6M4.500 0v14M8.500 0v8M12.500 0v8" stroke="#666"/><circle cx="5" cy="4" r="2" fill="#000"/><path d="m8 7 7 8" stroke="#b04a20" stroke-width="2.500"/></svg>设置插入点</button>
    <span class="h-4 w-px bg-gray-300"></span>
    <button class="flex items-center gap-1 text-black"><svg class="size-4" viewBox="0 0 16 16"><path d="M.5 3.500h8v11h-8z" fill="#dfeafa" stroke="#456fa8"/><path d="M7 7h9v8H7z" fill="#4450b8"/><path d="M9 8h5v3H9z" fill="#fff"/><path d="M7 4q2-4 6-2M13 0v4H9" fill="none" stroke="#456fa8"/></svg>导入</button>
    <button class="flex items-center gap-1 text-black"><svg class="size-4" viewBox="0 0 16 16"><path d="M1.500.5h8v10h-8z" fill="#dfeafa" stroke="#456fa8"/><path d="M7 7h9v8H7z" fill="#4450b8"/><path d="M9 8h5v3H9z" fill="#fff"/><path d="M2 13h3M3 6h5M3 3h5" stroke="#456fa8"/></svg>导出</button>
    <span class="h-4 w-px bg-gray-300"></span>
    <button class="flex items-center gap-1 text-black"><svg class="size-4" viewBox="0 0 16 16"><circle cx="6" cy="6" r="4.800" fill="#e6f4fb" stroke="#222" stroke-width="1.400"/><path d="m10 10 5 5" stroke="#222" stroke-width="2.500"/></svg>查询多边形库</button>
  </div>
  <div class="flex h-7 shrink-0 items-center bg-gradient-to-b from-white to-[#ebebeb] pb-px pl-1">
    <span class="mr-[3px] h-4 w-0.5 border-l-2 border-dotted border-gray-400"></span>
    <div class="flex h-[18px] w-[184px] items-center bg-[#f0f0f0]">
      <label class="flex w-[66px] items-center gap-2"><input type="radio" name="off" checked class="size-[11px] appearance-none rounded-full border border-gray-500 bg-white checked:bg-black checked:shadow-[inset_0_0_0_2px_white]">不偏移</label>
      <label class="flex w-[51px] items-center gap-2"><input type="radio" name="off" class="size-[11px] appearance-none rounded-full border border-gray-400 bg-white">正交</label>
      <label class="flex items-center gap-2"><input type="radio" name="off" class="size-[11px] appearance-none rounded-full border border-gray-400 bg-white">极坐标</label>
    </div>
    <span class="ml-0.5 h-4 w-px bg-gray-400"></span>
    <label for="ox" class="ml-1 w-[27px] font-['Noto_Sans',sans-serif] text-[13px]">X =</label>
    <div class="flex h-[23px] w-[78px] items-center border border-[#7a7a7a]">
      <input id="ox" value="0" class="w-[60px] bg-transparent text-right text-gray-500">
      <div class="ml-1.5 flex flex-col gap-2 text-gray-600"><button aria-label="增加"><svg class="block h-1 w-1.5 rotate-180"><use href="#dd"/></svg></button><button aria-label="减少"><svg class="block h-1 w-1.5"><use href="#dd"/></svg></button></div>
    </div>
    <span class="ml-[5px] w-[35px] font-['Noto_Sans',sans-serif]">mm</span>
    <label for="oy" class="w-[26px] font-['Noto_Sans',sans-serif] text-[13px]">Y =</label>
    <div class="flex h-[23px] w-[78px] items-center border border-[#7a7a7a]">
      <input id="oy" value="0" class="w-[60px] bg-transparent text-right text-gray-500">
      <div class="ml-1.5 flex flex-col gap-2 text-gray-600"><button aria-label="增加"><svg class="block h-1 w-1.5 rotate-180"><use href="#dd"/></svg></button><button aria-label="减少"><svg class="block h-1 w-1.5"><use href="#dd"/></svg></button></div>
    </div>
    <span class="ml-[5px] font-['Noto_Sans',sans-serif]">mm</span>
  </div>
  <div class="min-h-0 flex-1 bg-black">
    <svg class="h-full w-[703px]" viewBox="663 148 703 468" preserveAspectRatio="xMinYMin">
      <g fill="none" shape-rendering="crispEdges">
        <path d="M852.500 188v390M964.500 188v390M1076.500 188v390M1188.500 188v390M778 371.500h523M778 394.500h523M778 562.500h523" stroke="#c4c4c4"/>
        <path d="M774 577.500h530" stroke="#c4c4c4"/>
        <path d="M768.500 188v390M767 188.500h8M767 394.500h8M767 562.500h8M767 577.500h8M778 586.500h523M778.500 581v7M852.500 581v7M964.500 581v7M1076.500 581v7M1188.500 578v10M1301.500 581v7M767 371.500h8" stroke="#008000"/>
        <path d="M774.500 188v392M777 185.500h525M1303.500 188v392M777 579.500h525M773 188.500h5M773 562.500h5M1301 188.500h5M1301 562.500h5M777.500 184v5M1300.500 184v5" stroke="#fff"/>
      </g>
      <path d="M777.500 188h523v388.500h-224v-14h-112v14h-112v-14h-75z" fill="none" stroke="#f00" stroke-width="3" shape-rendering="crispEdges"/>
      <path d="m1030 375 16 15M1046 375l-16 15" stroke="#f00" stroke-width="2.500"/>
      <g fill="#bfbfbf" text-anchor="middle" class="font-['DejaVu_Sans',sans-serif] text-[11px]">
        <text x="758" y="285">2450</text><text x="762" y="387">300</text><text x="758" y="483">2250</text><text x="762" y="574">200</text>
        <text x="815" y="593">1000</text><text x="908" y="593">1500</text><text x="1020" y="593">1500</text><text x="1132" y="593">1500</text><text x="1244" y="593">1500</text>
      </g>
      <g fill="#0f0" stroke="#0f0" stroke-width=".4" text-anchor="middle" class="font-['DejaVu_Sans',sans-serif] text-[14px]">
        <text x="1038" y="175">7000</text><text x="758" y="381">5000</text><text x="1319" y="381">5000</text><text x="762" y="575">200</text><text x="1316" y="575">200</text>
        <text x="815" y="602">1000</text><text x="908" y="602">1500</text><text x="1020" y="602">1500</text><text x="1188" y="602">3000</text>
      </g>
    </svg>
  </div>
  <div class="h-7 shrink-0 border-b border-gray-400 pl-0.5 pt-0.5"><button class="h-[23px] w-[58px] border border-[#0078d7] bg-[#e2eff9]">动态输入</button></div>
  <div class="flex h-[42px] shrink-0 items-center justify-end gap-[15px] pr-[19px]">
    <button class="h-6 w-[72px] border-2 border-[#0078d7] bg-[#e1e1e1]">确定</button>
    <button class="h-6 w-[72px] border border-[#adadad] bg-[#e1e1e1]">取消</button>
  </div>
  <div class="flex h-5 shrink-0 gap-0.5 [font-feature-settings:'hwid'] *:border *:border-gray-300 *:bg-gradient-to-b *:from-white *:to-[#ededed] *:pl-px">
    <span class="w-[148px]">坐标 (X: 337 Y: 5736)</span><span class="w-[148px]">命令: 画直线</span><span class="flex-1">请选择下一点</span>
  </div>
</section>

<div role="dialog" aria-label="定义网格" class="absolute left-[175px] top-[289px] w-[411px] border border-[#2b87df] bg-[#f0f0f0] pb-[7px] shadow-[2px_5px_16px_rgba(0,0,0,0.5)] [font-feature-settings:'hwid']">
  <div class="flex h-[25px] items-center bg-white pb-0.5 pl-[3px]"><h2>定义网格</h2><button aria-label="关闭" class="ml-auto mr-2.5"><svg class="size-2.5" viewBox="0 0 10 10"><path d="m0 0 10 10M10 0 0 10" stroke="#000" stroke-width="1.200"/></svg></button></div>
  <fieldset class="mx-[13px] mt-[14px] h-[66px] border border-[#dcdcdc] pl-[7px] pr-[9px]">
    <legend class="h-4 whitespace-nowrap pr-0.5"><label for="gx">水平方向间距(mm)=&gt;间距*个数,间距,间距*个数,间距,...</label></legend>
    <textarea id="gx" autofocus class="mt-0.5 block h-[41px] w-full resize-none border border-[#64707c] bg-white px-px outline-none selection:bg-[#0078d7] selection:text-white">1000,1500,1500,1500,1500</textarea>
  </fieldset>
  <fieldset class="mx-[13px] mt-[7px] h-[66px] border border-[#dcdcdc] pl-[7px] pr-[9px]">
    <legend class="h-4 whitespace-nowrap pr-0.5"><label for="gy2">垂直方向间距(mm)=&gt;间距*个数,间距,间距*个数,间距,...</label></legend>
    <textarea id="gy2" class="mt-0.5 block h-[41px] w-full resize-none border border-[#7a7a7a] bg-white px-px outline-none">200,2250,300,2450</textarea>
  </fieldset>
  <div class="mt-3 flex justify-end gap-[15px] pr-[14px]">
    <button class="h-6 w-[72px] border border-[#adadad] bg-[#e1e1e1]">确定</button>
    <button class="h-6 w-[72px] border border-[#adadad] bg-[#e1e1e1]">取消</button>
  </div>
</div>

<svg class="pointer-events-none absolute left-[136px] top-[270px] h-[112px] w-[304px]" viewBox="0 0 304 112"><ellipse cx="152" cy="56" rx="150" ry="53" fill="none" stroke="#f00" stroke-width="3"/></svg>

<script>
  const field = document.getElementById('gx');
  field.focus();
  field.select();
</script>
</body>
</html>
